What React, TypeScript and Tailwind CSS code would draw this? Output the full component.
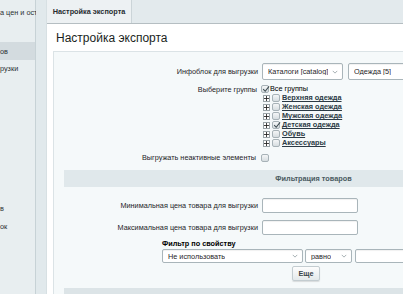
import React from 'react';

const groups = [
  { name: 'Верхняя одежда', checked: false },
  { name: 'Женская одежда', checked: false },
  { name: 'Мужская одежда', checked: false },
  { name: 'Детская одежда', checked: true },
  { name: 'Обувь', checked: false },
  { name: 'Аксессуары', checked: false },
];

function Check({ checked }: { checked?: boolean }) {
  return (
    <span className="relative flex h-[8px] w-[8px] shrink-0 items-center justify-center rounded-[2px] border border-[#a7b2b7] bg-gradient-to-b from-[#f4f6f7] to-[#d6dde0]">
      {checked && (
        <svg viewBox="0 0 10 10" className="absolute left-[0px] top-[-1px] h-[8px] w-[8px]">
          <path d="M1.5 5.2 L4 7.8 L8.8 1.8" fill="none" stroke="#3d4a50" strokeWidth="1.3" />
        </svg>
      )}
    </span>
  );
}

function Plus() {
  return (
    <span className="flex h-[7px] w-[7px] shrink-0 items-center justify-center border border-[#9aa4a8] bg-white">
      <svg viewBox="0 0 7 7" className="h-[5px] w-[5px]">
        <path d="M0 3.5 H7 M3.5 0 V7" stroke="#222" strokeWidth="1.2" />
      </svg>
    </span>
  );
}

function Chevron() {
  return (
    <svg viewBox="0 0 8 5" className="h-[4px] w-[6px] shrink-0">
      <path d="M1 1 L4 4 L7 1" fill="none" stroke="#8a969b" strokeWidth="1" />
    </svg>
  );
}

function Select({ value, className }: { value: string; className: string }) {
  return (
    <div
      className={`flex shrink-0 items-center justify-between rounded-[2px] border border-[#a9b5ba] bg-white pl-[5px] pr-[4px] shadow-[inset_0_1px_1px_rgba(0,0,0,0.06)] ${className}`}
    >
      <span className="truncate">{value}</span>
      <Chevron />
    </div>
  );
}

function Input({ className }: { className: string }) {
  return (
    <div
      className={`shrink-0 rounded-[2px] border border-[#a9b5ba] bg-white shadow-[inset_0_1px_1px_rgba(0,0,0,0.06)] ${className}`}
    />
  );
}

export default function App() {
  return (
    <div
      className="flex h-[294px] w-[403px] overflow-hidden bg-white text-[7.3px] leading-none text-[#1f2529]"
      style={{ fontFamily: '"Liberation Sans", Arial, sans-serif' }}
    >
      {/* sidebar */}
      <div className="flex w-[36px] shrink-0 flex-col border-r border-[#c7d2d6] bg-[#e8eef0] text-[#2a3135]">
        <div className="mt-[9px] whitespace-nowrap">а цен и ост</div>
        <div className="mt-[26px] flex h-[18px] items-center bg-[#d3dbdf]">ов</div>
        <div className="mt-[5px]">рузки</div>
        <div className="mt-[132px]">в</div>
        <div className="mt-[11px]">ок</div>
      </div>
      <div className="w-[11px] shrink-0 border-r border-[#d7e0e3] bg-[#e1e9ec]" />

      {/* main */}
      <div className="flex min-w-0 flex-1 flex-col">
        <div className="flex h-[24px] shrink-0 border-b border-[#b5bec2] bg-[#e3eaed]">
          <div className="flex w-[85px] items-center justify-center border-r border-[#cbd4d8] bg-[#edf1f3] font-bold text-[#262c30]">
            Настройка экспорта
          </div>
        </div>
        <div className="flex h-[27px] shrink-0 items-center pl-[9px] text-[12px] text-[#1a1f22]">
          Настройка экспорта
        </div>

        <div className="ml-[6px] flex-1 border-l border-t border-[#dbe3e6] bg-[#f5f9fa] pt-[11px]">
          {/* infoblock */}
          <div className="flex items-center">
            <div className="w-[208px] shrink-0 pr-[4px] text-right">Инфоблок для выгрузки</div>
            <Select value="Каталоги [catalog]" className="h-[17px] w-[81px]" />
            <Select value="Одежда [5]" className="ml-[5px] h-[17px] w-[70px]" />
          </div>

          {/* groups */}
          <div className="mt-[5px] flex">
            <div className="w-[207px] shrink-0 pr-[4px] pt-[1px] text-right">Выберите группы</div>
            <div className="flex flex-col">
              <div className="flex items-center gap-[1px]">
                <Check checked />
                <span className="text-black">Все группы</span>
              </div>
              {groups.map((g) => (
                <div key={g.name} className="mt-[1px] flex h-[8px] items-center gap-[2px] pl-[2px]">
                  <Plus />
                  <Check checked={g.checked} />
                  <span className="font-bold text-[#2b3a45] underline">{g.name}</span>
                </div>
              ))}
            </div>
          </div>

          {/* inactive */}
          <div className="mt-[7px] flex items-center">
            <div className="w-[207px] shrink-0 pr-[5px] text-right">Выгружать неактивные элементы</div>
            <Check />
          </div>

          {/* filter section */}
          <div className="ml-[10px] mt-[8px] flex h-[17px] items-center justify-center bg-[#e0e8eb] pl-[160px] font-bold text-[#4a5a61]">
            <span className="whitespace-nowrap">Фильтрация товаров</span>
          </div>

          <div className="mt-[11px] flex items-center">
            <div className="w-[208px] shrink-0 pr-[4px] text-right whitespace-nowrap">
              Минимальная цена товара для выгрузки
            </div>
            <Input className="h-[15px] w-[96px]" />
          </div>
          <div className="mt-[7px] flex items-center">
            <div className="w-[208px] shrink-0 pr-[4px] text-right whitespace-nowrap">
              Максимальная цена товара для выгрузки
            </div>
            <Input className="h-[15px] w-[96px]" />
          </div>

          <div className="ml-[108px] mt-[5px] font-bold text-black">Фильтр по свойству</div>
          <div className="ml-[108px] mt-[2px] flex items-center">
            <Select value="Не использовать" className="h-[14px] w-[141px]" />
            <Select value="равно" className="ml-[2px] h-[14px] w-[47px]" />
            <Input className="ml-[3px] h-[14px] w-[60px]" />
          </div>
          <div className="mt-[3px] flex pl-[238px]">
            <div className="flex h-[15px] w-[28px] items-center justify-center rounded-[2px] border border-[#c3ccd0] bg-gradient-to-b from-[#fdfdfd] to-[#e4e9eb] font-bold text-[#3a4449] shadow-[0_1px_1px_rgba(0,0,0,0.12)]">
              Еще
            </div>
          </div>
          <div className="ml-[10px] mt-[7px] h-[10px] bg-[#dce4e7]" />
        </div>
      </div>
    </div>
  );
}
